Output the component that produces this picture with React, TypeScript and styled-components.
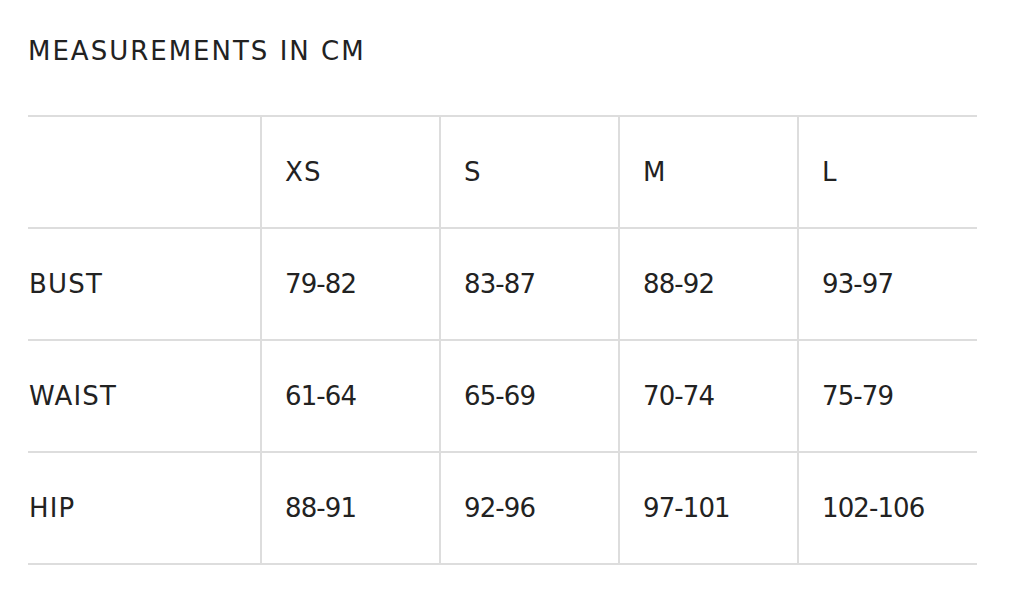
import React from 'react';
import styled, { createGlobalStyle } from 'styled-components';

const sizes = ['XS', 'S', 'M', 'L'];
const rows = [
  { name: 'BUST', values: ['79-82', '83-87', '88-92', '93-97'] },
  { name: 'WAIST', values: ['61-64', '65-69', '70-74', '75-79'] },
  { name: 'HIP', values: ['88-91', '92-96', '97-101', '102-106'] },
];

const GlobalStyle = createGlobalStyle`
  body {
    margin: 0;
    background: #fff;
    font-family: "DejaVu Sans", sans-serif;
    color: #222;
  }
`;

const Page = styled.div`
  padding: 33px 0 0 28px;
`;

const Heading = styled.h2`
  margin: 0 0 46px 0;
  font-size: 26px;
  font-weight: 400;
  line-height: 36px;
  letter-spacing: 2px;
`;

const Table = styled.table`
  width: 949px;
  border-collapse: collapse;
  table-layout: fixed;
  border-top: 2px solid #ddd;
`;

const Col = styled.col<{ $w: number }>`
  width: ${({ $w }) => $w}px;
`;

const Row = styled.tr`
  height: 112px;
  border-bottom: 2px solid #ddd;
`;

const Cell = styled.td<{ $first?: boolean; $num?: boolean }>`
  padding: 0 0 0 ${({ $first }) => ($first ? '1px' : '23px')};
  border-left: ${({ $first }) => ($first ? 'none' : '2px solid #ddd')};
  font-size: 26px;
  font-weight: 400;
  letter-spacing: ${({ $num }) => ($num ? '-0.9px' : '1.2px')};
  vertical-align: middle;
  white-space: nowrap;
`;

export default function App() {
  return (
    <Page>
      <GlobalStyle />
      <Heading>MEASUREMENTS IN CM</Heading>
      <Table>
        <colgroup>
          <Col $w={233} />
          {sizes.map((s) => (
            <Col key={s} $w={179} />
          ))}
        </colgroup>
        <tbody>
          <Row>
            <Cell $first />
            {sizes.map((s) => (
              <Cell key={s}>{s}</Cell>
            ))}
          </Row>
          {rows.map((r) => (
            <Row key={r.name}>
              <Cell $first>{r.name}</Cell>
              {r.values.map((v) => (
                <Cell key={v} $num>
                  {v}
                </Cell>
              ))}
            </Row>
          ))}
        </tbody>
      </Table>
    </Page>
  );
}
